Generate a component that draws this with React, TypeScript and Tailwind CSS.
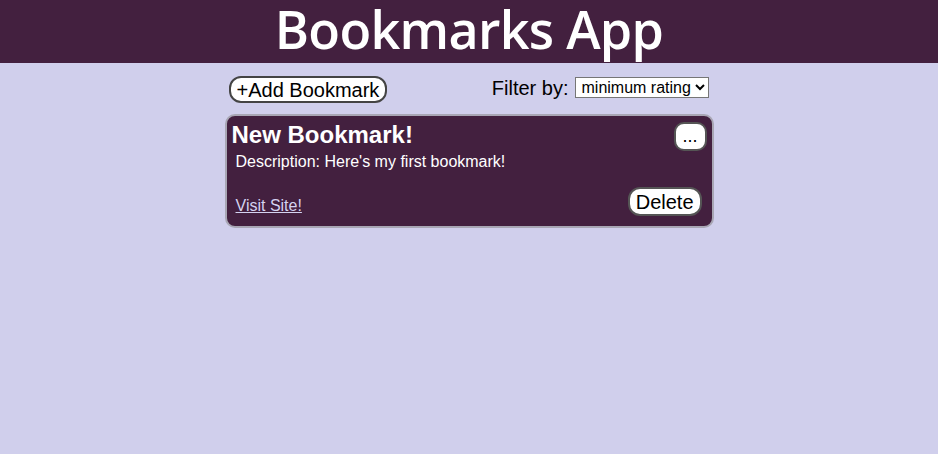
import React from "react";

const bookmarks = [
  {
    id: 1,
    title: "New Bookmark!",
    description: "Here's my first bookmark!",
    url: "#",
  },
];

export default function App() {
  return (
    <div className="min-h-[454px] bg-[#d0cfec] font-['Liberation_Sans',Arial,sans-serif] text-black">
      <header className="h-[63px] bg-[#43203f] flex justify-center overflow-hidden">
        <h1 className="font-['Open_Sans',sans-serif] font-semibold text-[52px] leading-[58px] text-white tracking-[-0.7px]">
          Bookmarks App
        </h1>
      </header>

      <main className="w-[489px] mx-auto pt-[13px]">
        <div className="flex items-center justify-between pl-[4px] pr-[5px]">
          <button className="h-[27px] px-[6px] bg-white border-2 border-[#444] rounded-[12px] text-[20px] leading-none">
            +Add Bookmark
          </button>
          <label className="flex items-center gap-[6px] text-[20px] -mt-[4px]">
            Filter by:
            <select className="h-[21px] w-[134px] bg-white border border-[#767676] text-[16px] leading-none pl-[2px]">
              <option>minimum rating</option>
            </select>
          </label>
        </div>

        <ul className="mt-[11px]">
          {bookmarks.map((b) => (
            <li
              key={b.id}
              className="h-[114px] bg-[#43203f] border-2 border-[#a8a6b4] rounded-[10px] text-white px-[5px] pt-[5px] pb-[10px] flex flex-col"
            >
              <div className="flex items-start justify-between">
                <h2 className="text-[24px] font-bold leading-[28px]">{b.title}</h2>
                <button className="mt-[1px] h-[29px] w-[33px] bg-white text-black border-2 border-[#555] rounded-[10px] text-[18px] leading-none pb-[2px]">
                  ...
                </button>
              </div>
              <p className="pl-[4px] mt-[1px] text-[16px] leading-[20px]">Description: {b.description}</p>
              <div className="mt-auto flex items-end justify-between pl-[4px] pr-[5px]">
                <a href={b.url} className="text-[16px] text-[#d5d3f0] underline leading-[20px]">
                  Visit Site!
                </a>
                <button className="h-[29px] px-[6px] bg-white text-black border-2 border-[#555] rounded-[12px] text-[20px] leading-none">
                  Delete
                </button>
              </div>
            </li>
          ))}
        </ul>
      </main>
    </div>
  );
}
